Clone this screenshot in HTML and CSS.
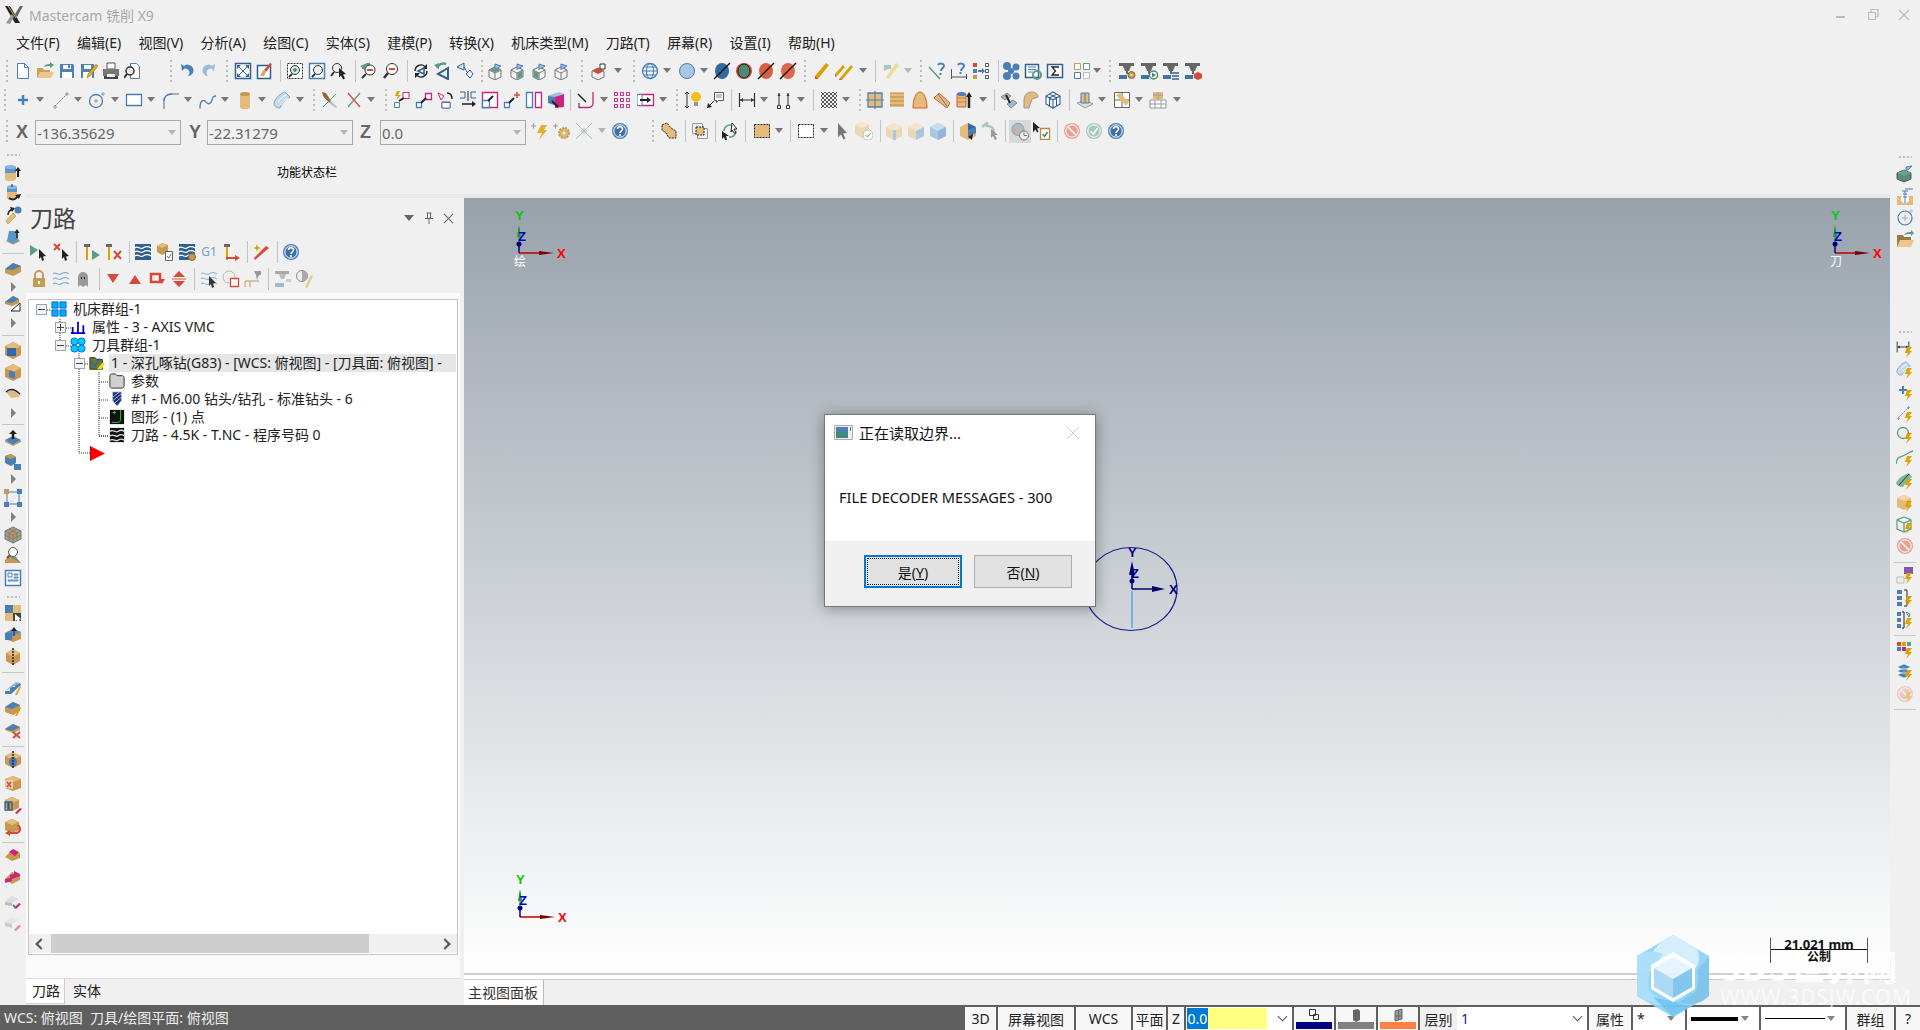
FILE: index.html
```html
<!DOCTYPE html>
<html lang="zh">
<head>
<meta charset="utf-8">
<title>Mastercam 铣削 X9</title>
<link rel="stylesheet" href="styles.css">
</head>
<body>
<svg class="defs" aria-hidden="true">
<defs>
<symbol id="bolt" viewBox="0 0 18 18"><path d="M11 7h5l-3 4h3l-6 7 2-5H9z" fill="#d9a300"/></symbol>
<symbol id="new" viewBox="0 0 18 18"><path d="M3.500 1.500h7l4 4v11h-11z" fill="#fff" stroke="#4a7fb5"/><path d="M10.500 1.500v4h4" fill="none" stroke="#4a7fb5"/></symbol>
<symbol id="open" viewBox="0 0 18 18"><path d="M1 16V6h6l1 2h6v8z" fill="#c9a060"/><path d="M1 16l3-6h14l-3 6z" fill="#eec58a"/><path d="M8 5c1-3 4-3 6-3V0l4 3-4 3V4c-2 0-4 0-6 1z" fill="#5d9b85"/></symbol>
<symbol id="save" viewBox="0 0 18 18"><path d="M2 2h13l1 1v13H2z" fill="#4f83b8"/><path d="M5 3h8v4H5z" fill="#fff"/><path d="M4 10h10v6H4z" fill="#fff"/><path d="M10 3h2v3h-2z" fill="#4f83b8"/></symbol>
<symbol id="saveas" viewBox="0 0 18 18"><path d="M1 2h13v14H1z" fill="#4f83b8"/><path d="M4 3h7v4H4zM3 10h9v6H3z" fill="#fff"/><path d="M7 16l1-4 8-10 2 2-8 10z" fill="#e0a820" stroke="#9c6a10" stroke-width=".5"/></symbol>
<symbol id="print" viewBox="0 0 18 18"><path d="M5 1h8v6H5z" fill="#fff" stroke="#555"/><path d="M1 7h16v7H1z" fill="#777"/><path d="M2 14h14v3H2z" fill="#444"/><path d="M5 12h8v3H5z" fill="#eee"/></symbol>
<symbol id="prev" viewBox="0 0 18 18"><path d="M6.500 1.500h6l3 3v12h-9z" fill="#fff" stroke="#4a7fb5"/><circle cx="6" cy="9" r="4" fill="#e8e8e8" stroke="#333" stroke-width="1.500"/><path d="M3 12l-3 4" stroke="#333" stroke-width="2"/></symbol>
<symbol id="undo" viewBox="0 0 18 18"><path d="M3 3l1 7 2.500-2.500c3 0 5 2 5 4 0 2-1 3-2 4 4-1 6-3 6-6 0-4-4-6-7-6L6 5z" fill="#4a7fb5" transform="translate(0 -1)"/></symbol>
<symbol id="redo" viewBox="0 0 18 18"><path d="M15 3l-1 7-2.500-2.500c-3 0-5 2-5 4 0 2 1 3 2 4-4-1-6-3-6-6 0-4 4-6 7-6L12 5z" fill="#9cbbd6" transform="translate(0 -1)"/></symbol>
<symbol id="fit" viewBox="0 0 18 18"><path d="M1.500 1.500h15v15h-15z" fill="#fff" stroke="#2f5f8f" stroke-width="1.500"/><path d="M4 4l10 10M14 4L4 14" stroke="#2f5f8f"/><path d="M3 3h4L3 7zM15 3v4l-4-4zM3 15v-4l4 4zM15 15h-4l4-4z" fill="#2f5f8f"/></symbol>
<symbol id="fitb" viewBox="0 0 18 18"><path d="M1.500 3.500h13v13h-13z" fill="#fff" stroke="#2f5f8f" stroke-width="1.500"/><path d="M4 14l3-6 3 2-2 4z" fill="#d6a860"/><path d="M8 8l6-7 2 1-6 8z" fill="#d64a3a"/></symbol>
<symbol id="zwin" viewBox="0 0 18 18"><path d="M1.500 1.500h15v15h-15z" fill="#fff" stroke="#333" stroke-dasharray="2 1"/><circle cx="9" cy="8" r="4.500" fill="#d5ebe2" stroke="#333"/><path d="M7 8h4M9 6v4" stroke="#3d8a6c" stroke-width="1.500"/><path d="M6 12l-3 3" stroke="#333" stroke-width="2"/></symbol>
<symbol id="ztar" viewBox="0 0 18 18"><path d="M1.500 1.500h15v15h-15z" fill="#fff" stroke="#4a7fb5" stroke-width="1.500"/><circle cx="10" cy="8" r="4.500" fill="#e8eef4" stroke="#333"/><path d="M7 12l-3 3" stroke="#333" stroke-width="2"/></symbol>
<symbol id="zsel" viewBox="0 0 18 18"><circle cx="7" cy="6" r="4.500" fill="#eee" stroke="#333"/><path d="M4 10l-3 4" stroke="#333" stroke-width="2"/><path d="M9 6l7 6-3 .5 2 4-2 1-2-4-2 2z" fill="#222"/></symbol>
<symbol id="unz" viewBox="0 0 18 18"><path d="M3 7a7 7 0 0 1 7-5" fill="none" stroke="#5d9b85" stroke-width="2.500"/><path d="M0 4l5-2v6z" fill="#5d9b85"/><circle cx="10" cy="8" r="5" fill="#fff" stroke="#333"/><path d="M7 8h6" stroke="#d64a3a" stroke-width="2"/><path d="M6 12l-4 4" stroke="#333" stroke-width="2"/></symbol>
<symbol id="unz2" viewBox="0 0 18 18"><circle cx="10" cy="7" r="5.500" fill="#fff" stroke="#333"/><path d="M7 7h6" stroke="#d64a3a" stroke-width="2"/><path d="M6 11l-4 5" stroke="#333" stroke-width="2.500"/></symbol>
<symbol id="rota" viewBox="0 0 18 18"><path d="M3 9a6 6 0 0 1 10-4.500M15 9a6 6 0 0 1-10 4.500" fill="none" stroke="#222" stroke-width="1.400"/><path d="M15 2v5H10zM3 16v-5h5z" fill="#222"/><path d="M12 6L6 9l6 3z" fill="#fff" stroke="#2f5f8f" stroke-width="1.500"/></symbol>
<symbol id="rotb" viewBox="0 0 18 18"><path d="M3 6a7 7 0 0 1 9-4" fill="none" stroke="#5d9b85" stroke-width="2.500"/><path d="M0 3l5-2v6z" fill="#5d9b85"/><path d="M14 6L4 12l10 5z" fill="#e8eef4" stroke="#2f5f8f" stroke-width="2"/></symbol>
<symbol id="rotc" viewBox="0 0 18 18"><path d="M8 1L1 5l7 3z" fill="#dbe7f1" stroke="#2f5f8f"/><path d="M14 8l-4 4 4 4 3-4z" fill="#e8eef4" stroke="#2f5f8f"/><path d="M8 5l3 5" stroke="#2f5f8f"/></symbol>
<symbol id="cvbase" viewBox="0 0 18 18"><path d="M8 5l6 3v7l-6 3-6-3V8z" fill="#f4f4f4" stroke="#777"/><path d="M8 5l6 3-6 3-6-3z" fill="#f4f4f4" stroke="#777"/><path d="M8 11v7" stroke="#777"/><path d="M8 8V2l6 2-5 3" fill="#9fbfd9" stroke="#4a7fb5"/></symbol>
<symbol id="cv1" viewBox="0 0 18 18"><use href="#cvbase"/><path d="M8 5.500l5.500 2.500L8 10.500 2.500 8z" fill="#5d9b85"/></symbol>
<symbol id="cv2" viewBox="0 0 18 18"><use href="#cvbase"/><path d="M2.500 8.500L7.500 11v6.200l-5-2.500z" fill="#5d9b85"/></symbol>
<symbol id="cv3" viewBox="0 0 18 18"><use href="#cvbase"/><path d="M13.500 8.500L8.500 11v6.200l5-2.500z" fill="#5d9b85"/></symbol>
<symbol id="cvr" viewBox="0 0 18 18"><path d="M8 6l6 3v6l-6 3-6-3V9z" fill="#f0f0f0" stroke="#777"/><path d="M8 6l6 3-6 3-6-3z" fill="#d64a3a"/><path d="M10 2h5v5h-5z" fill="#fff" stroke="#333"/></symbol>
<symbol id="globe" viewBox="0 0 18 18"><circle cx="9" cy="9" r="7.500" fill="#e9f0f6" stroke="#4a7fb5" stroke-width="1.300"/><ellipse cx="9" cy="9" rx="3.500" ry="7.500" fill="none" stroke="#4a7fb5"/><path d="M1.500 9h15M3 5h12M3 13h12" stroke="#4a7fb5"/></symbol>
<symbol id="sphere" viewBox="0 0 18 18"><circle cx="9" cy="9" r="7.500" fill="#a9c6e2" stroke="#4a7fb5"/></symbol>
<symbol id="disc" viewBox="0 0 18 18"><ellipse cx="9" cy="9" rx="7" ry="8" fill="currentColor"/><path d="M1 17L17 1" stroke="#111" stroke-width="1.500"/></symbol>
<symbol id="discg" viewBox="0 0 18 18"><ellipse cx="9" cy="9" rx="8" ry="8" fill="#d64a3a"/><ellipse cx="9" cy="9" rx="6" ry="7" fill="#4c8a72" stroke="#222"/></symbol>
<symbol id="pencil" viewBox="0 0 18 18"><path d="M2 14L13 1l3 2L5 17l-3 0z" fill="#d9a300"/><path d="M2 14l3 3H2z" fill="#d64a3a"/></symbol>
<symbol id="pencil2" viewBox="0 0 18 18"><path d="M0 12L8 3l2 2-8 9z" fill="#d9a300"/><path d="M5 16l11-13 2 2L7 18z" fill="#d9a300"/><path d="M0 12l2 2-2 1zM5 16l2 2-3 0z" fill="#d64a3a"/></symbol>
<symbol id="bent" viewBox="0 0 18 18"><path d="M4 15L14 1l3 2L7 17z" fill="#eedaa0"/><path d="M2 3h7v4H6l-4 2z" fill="#a8cabb"/></symbol>
<symbol id="qline" viewBox="0 0 18 18"><path d="M1 5l11 12" stroke="#5d9b85" stroke-width="1.500"/><path d="M10 3c1-2 6-2 6 1 0 2-3 2-3 5M12.500 11v2" fill="none" stroke="#4a7fb5" stroke-width="2"/></symbol>
<symbol id="qdim" viewBox="0 0 18 18"><path d="M1.500 7v10M16.500 12v5M2 15h14" stroke="#555"/><path d="M8 3c1-2 6-2 6 1 0 2-3 2-3 5M10.500 10v2" fill="none" stroke="#4a7fb5" stroke-width="2"/></symbol>
<symbol id="lst" viewBox="0 0 18 18"><path d="M1 1h4v4H1z" fill="#d64a3a"/><path d="M1 7h4v4H1z" fill="#4a7fb5"/><path d="M1 13h4v4H1z" fill="#c49a55"/><path d="M6 9h5" stroke="#4a7fb5" stroke-width="2"/><path d="M10 6l3 3-3 3z" fill="#4a7fb5"/><path d="M13.500 1.500h3v3h-3zM13.500 7.500h3v3h-3zM13.500 13.500h3v3h-3z" fill="#fff" stroke="#555"/></symbol>
<symbol id="fan" viewBox="0 0 18 18"><circle cx="9" cy="9" r="3" fill="#4a7fb5"/><circle cx="5" cy="4" r="4" fill="#4a7fb5"/><circle cx="14" cy="5" r="3.500" fill="#4a7fb5"/><circle cx="14" cy="14" r="3.500" fill="#4a7fb5"/><circle cx="5" cy="14" r="4" fill="#4a7fb5"/></symbol>
<symbol id="doc" viewBox="0 0 18 18"><path d="M1.500 2.500h13v13h-13z" fill="#fff" stroke="#2f5f8f" stroke-width="1.500"/><path d="M4 5h8M4 7.500h8M4 10h5" stroke="#4a7fb5"/><circle cx="13" cy="13" r="4" fill="none" stroke="#5d9b85" stroke-width="2"/></symbol>
<symbol id="sigma" viewBox="0 0 18 18"><path d="M1.500 2.500h15v13h-15z" fill="#fff" stroke="#2f5f8f" stroke-width="1.500"/><path d="M13 5H6l3.500 4L6 13h7" fill="none" stroke="#222" stroke-width="1.300"/></symbol>
<symbol id="grid4" viewBox="0 0 18 18"><path d="M1.500 1.500h6v6h-6z" fill="#fff" stroke="#c49a55"/><path d="M10.500 1.500h6v6h-6z" fill="#fff" stroke="#5d9b85"/><path d="M1.500 10.500h6v6h-6z" fill="#fff" stroke="#4a7fb5"/><path d="M10.500 10.500h6v6h-6z" fill="#fff" stroke="#bbb"/></symbol>
<symbol id="mach" viewBox="0 0 18 18"><path d="M1 1h15v3H1zM5 4h8l-2 5H7z" fill="#666"/><path d="M8 9h2v3H8z" fill="#666"/><path d="M1 13h8v4H1z" fill="#3f74a8"/></symbol>
<symbol id="mach1" viewBox="0 0 18 18"><use href="#mach"/><circle cx="13.500" cy="13" r="3.500" fill="#c49a55" stroke="#8d6a30"/><circle cx="13.500" cy="13" r="1" fill="#fff"/></symbol>
<symbol id="mach2" viewBox="0 0 18 18"><use href="#mach"/><circle cx="13.500" cy="13" r="4" fill="#fff" stroke="#4c8a72" stroke-width="1.500"/><path d="M12 10.500l4 2.500-4 2.500z" fill="#4c8a72"/></symbol>
<symbol id="mach3" viewBox="0 0 18 18"><use href="#mach"/><path d="M10 11h7M10 14h7M10 17h7" stroke="#2f5f8f" stroke-width="1.500"/></symbol>
<symbol id="mach4" viewBox="0 0 18 18"><use href="#mach"/><path d="M10 12l4-2 4 2v4l-4 2-4-2z" fill="#d64a3a"/></symbol>
<symbol id="plus" viewBox="0 0 18 18"><path d="M4 9h10M9 4v10" stroke="#4a7fb5" stroke-width="2.500"/></symbol>
<symbol id="line" viewBox="0 0 18 18"><path d="M3 15L15 3" stroke="#4a7fb5" stroke-dasharray="2 1"/><path d="M1 16h4M3 14v4M13 3h4M15 1v4" stroke="#999"/></symbol>
<symbol id="circ" viewBox="0 0 18 18"><circle cx="8" cy="10" r="6.500" fill="none" stroke="#4a7fb5" stroke-width="1.300"/><path d="M6 10h4M8 8v4" stroke="#999"/><path d="M13 3h4M15 1v4" stroke="#999"/></symbol>
<symbol id="rect" viewBox="0 0 18 18"><path d="M1.500 3.500h15v11h-15z" fill="#fff" stroke="#4a7fb5" stroke-width="1.300"/></symbol>
<symbol id="arc" viewBox="0 0 18 18"><path d="M2 18V9c0-4 4-6 8-6h7" fill="none" stroke="#666"/><path d="M2 10c0-4 3-7 8-7" fill="none" stroke="#4a7fb5" stroke-width="1.500"/></symbol>
<symbol id="spline" viewBox="0 0 18 18"><path d="M1 17c0-8 4-9 6-6s5 2 6-2 2-4 4-4" fill="none" stroke="#4a7fb5" stroke-width="1.300"/><path d="M1 14v4" stroke="#999"/></symbol>
<symbol id="cyl" viewBox="0 0 18 18"><path d="M4 3h10v13a5 2 0 0 1-10 0z" fill="#e5bb7c"/><ellipse cx="9" cy="3" rx="5" ry="2" fill="#c9974f"/></symbol>
<symbol id="surf" viewBox="0 0 18 18"><path d="M1 12C4 5 7 3 12 1l5 5c-5 2-7 5-10 11-4 0-6-2-6-5z" fill="#c8d9e8" stroke="#7ea3c4"/><path d="M5 11c2-3 4-5 8-7M8 14c1-3 3-5 7-7" fill="none" stroke="#fff"/></symbol>
<symbol id="brush" viewBox="0 0 18 18"><path d="M1 1l4 1 5 8-2 2-6-7z" fill="#8a6a3c"/><path d="M8 12l2-2 6 6-1 1z" fill="#bbb"/><path d="M2 16L15 3" stroke="#5d9b85"/></symbol>
<symbol id="xline" viewBox="0 0 18 18"><path d="M3 16L15 2" stroke="#5d9b85" stroke-width="1.300"/><path d="M3 2l12 14" stroke="#d64a3a" stroke-width="1.300"/></symbol>
<symbol id="mvb" viewBox="0 0 18 18"><path d="M10 1.500h6v6h-6z" fill="#fff" stroke="#c9247e"/><path d="M1.500 11.500h5v5h-5z" fill="#fff" stroke="#4a7fb5"/><path d="M6 10l5-3" stroke="#222" stroke-width="2"/><path d="M4 0L2 5h3l-2 4 5-5H5l2-4z" fill="#d9a300"/></symbol>
<symbol id="mv" viewBox="0 0 18 18"><path d="M10.500 2.500h6v6h-6z" fill="#fff" stroke="#c9247e" stroke-width="1.300"/><path d="M1.500 11.500h5v5h-5z" fill="#fff" stroke="#4a7fb5" stroke-width="1.300"/><path d="M6 12l5-5" stroke="#222" stroke-width="2"/></symbol>
<symbol id="mvr" viewBox="0 0 18 18"><path d="M1 2l6 3-3 4zM5 11h8v6H5z" fill="#fff" stroke="#c9247e"/><path d="M5 11.500h8v5.500H5z" fill="#fff" stroke="#4a7fb5"/><path d="M10 2c3 0 5 2 5 6" fill="none" stroke="#222" stroke-width="1.500"/></symbol>
<symbol id="mvm" viewBox="0 0 18 18"><path d="M1 1h5M1 7h5M6 1v6M12 1h5M12 7h5M12 1v6" stroke="#2f5f8f" fill="none"/><path d="M9 0v10" stroke="#222"/><path d="M3 13h11" stroke="#222" stroke-width="1.500"/><path d="M13 10l4 3-4 3z" fill="#222"/></symbol>
<symbol id="mvs" viewBox="0 0 18 18"><path d="M1.500 1.500h15v15h-15z" fill="#fff" stroke="#c9247e" stroke-width="1.300"/><path d="M1.500 9.500h7v7h-7z" fill="#fff" stroke="#4a7fb5" stroke-width="1.300"/><path d="M7 10l5-5" stroke="#222" stroke-width="2"/></symbol>
<symbol id="mvt" viewBox="0 0 18 18"><path d="M1.500 11.500h5v5h-5z" fill="#fff" stroke="#4a7fb5" stroke-width="1.300"/><path d="M6 12l5-5" stroke="#222" stroke-width="2"/><path d="M11 4h6M14 1v6" stroke="#d64a3a" stroke-width="1.500"/></symbol>
<symbol id="mvo" viewBox="0 0 18 18"><path d="M1.500 1.500h6v15h-6z" fill="#fff" stroke="#4a7fb5" stroke-width="1.300"/><path d="M10.500 1.500h6v15h-6z" fill="#fff" stroke="#c9247e" stroke-width="1.300"/></symbol>
<symbol id="mvc" viewBox="0 0 18 18"><path d="M1 5l9-3v13l-9-3z" fill="#4a7fb5"/><path d="M1 5l11-4 5 2-9 3z" fill="#9fc0de"/><path d="M8 6l9-3v13l-9 1z" fill="#c9247e"/><path d="M5 10l6 6" stroke="#222" stroke-width="2"/></symbol>
<symbol id="fil" viewBox="0 0 18 18"><path d="M2 16.500h10c2 0 4-2 4-4V1" fill="none" stroke="#c9247e" stroke-width="1.300"/><path d="M1 3l8 8" stroke="#222" stroke-width="1.500"/><path d="M2 12v5" stroke="#222"/></symbol>
<symbol id="mg" viewBox="0 0 18 18"><path d="M1.500 1.500h3v3h-3zM7.500 1.500h3v3h-3zM13.500 1.500h3v3h-3zM1.500 7.500h3v3h-3zM7.500 7.500h3v3h-3zM13.500 7.500h3v3h-3zM1.500 13.500h3v3h-3zM7.500 13.500h3v3h-3zM13.500 13.500h3v3h-3z" fill="#fff" stroke="#c9247e"/></symbol>
<symbol id="mvx" viewBox="0 0 18 18"><path d="M1.500 3.500h15v11h-15z" fill="#fff" stroke="#c9247e" stroke-width="1.300"/><path d="M0 3.500h5v11H0z" fill="#fff" stroke="#4a7fb5"/><path d="M3 9h8" stroke="#222" stroke-width="2"/><path d="M10 6l4 3-4 3z" fill="#222"/></symbol>
<symbol id="bulb" viewBox="0 0 18 18"><path d="M3 1v16M1 3l2-2 2 2M1 15l2 2 2-2" fill="none" stroke="#333"/><circle cx="12" cy="6" r="5" fill="#f0c020"/><path d="M10 11h4v4h-4z" fill="#999"/></symbol>
<symbol id="note" viewBox="0 0 18 18"><path d="M8.500 1.500h9v8h-5l-2 2v-2h-2z" fill="#fff" stroke="#555"/><path d="M10 4h6M10 6h6" stroke="#888"/><path d="M1 17l7-7" stroke="#222"/><path d="M1 17l1-5 4 4z" fill="#222"/></symbol>
<symbol id="dimh" viewBox="0 0 18 18"><path d="M1.500 2v14M16.500 2v14M2 9h14" stroke="#333" stroke-width="1.200"/><path d="M2 9l3-2v4zM16 9l-3-2v4z" fill="#333"/></symbol>
<symbol id="dimv" viewBox="0 0 18 18"><path d="M4 2v12M13 2v12" stroke="#333"/><path d="M2.500 14.500h3v3h-3zM11.500 14.500h3v3h-3z" fill="#fff" stroke="#333"/><path d="M4 2L2.500 5h3zM13 2l-1.500 3h3z" fill="#333"/></symbol>
<symbol id="hatch" viewBox="0 0 18 18"><defs><pattern id="pt" width="4" height="4" patternUnits="userSpaceOnUse"><path d="M0 0h2v2H0zM2 2h2v2H2z" fill="#555"/></pattern></defs><path d="M1 1h16v16H1z" fill="url(#pt)"/></symbol>
<symbol id="s1" viewBox="0 0 18 18"><path d="M2 2h14v14H2z" fill="#e5bb7c" stroke="#4a7fb5" stroke-width="1.300"/><path d="M9 0v18M0 9h18" stroke="#4a7fb5"/></symbol>
<symbol id="s2" viewBox="0 0 18 18"><path d="M2 2h14v14H2z" fill="#e5bb7c"/><path d="M2 2h14M2 6h14M2 10h14M2 14h14" stroke="#b48a40"/></symbol>
<symbol id="s3" viewBox="0 0 18 18"><path d="M2 17C2 8 5 1 9 1s7 7 7 16z" fill="#e5bb7c" stroke="#d6602a"/></symbol>
<symbol id="s4" viewBox="0 0 18 18"><path d="M1 7l5-5 11 10-3 5z" fill="#e5bb7c" stroke="#d6602a"/><path d="M5 3l9 12" stroke="#4a7fb5"/></symbol>
<symbol id="s5" viewBox="0 0 18 18"><path d="M1 3h9v13H1z" fill="#e5bb7c" stroke="#d6602a"/><ellipse cx="5.500" cy="3" rx="4.500" ry="2" fill="#4a7fb5"/><path d="M1 7h9M1 11h9" stroke="#b48a40"/><path d="M13 17V5" stroke="#222" stroke-width="2.500"/><path d="M10 6l3-5 3 5z" fill="#222"/></symbol>
<symbol id="w1" viewBox="0 0 18 18"><path d="M1 6l6-4 4 3-6 4zM7 13l6-4 4 3-6 5z" fill="#9eb8d0" stroke="#888"/><path d="M6 4l4 8" stroke="#222" stroke-width="2"/></symbol>
<symbol id="w2" viewBox="0 0 18 18"><path d="M2 17V9c0-5 3-8 8-8 4 0 6 3 6 5l-6 2-3 9z" fill="#e5bb7c" stroke="#999"/></symbol>
<symbol id="w3" viewBox="0 0 18 18"><path d="M9 1l7 4v8l-7 4-7-4V5zM2 5l7 4 7-4M9 9v8M5.500 3l7 4v8M12.500 3l-7 4v8" fill="#fff" stroke="#2f5f8f" stroke-width="1.100"/></symbol>
<symbol id="p1" viewBox="0 0 18 18"><path d="M1 12l8 5 8-4-8-4z" fill="#ddd" stroke="#999"/><path d="M5 2h8v10H5z" fill="#e5bb7c" stroke="#4a7fb5"/><path d="M9 2v10" stroke="#4a7fb5"/></symbol>
<symbol id="p2" viewBox="0 0 18 18"><path d="M1.500 1.500h15v15h-15z" fill="#fff" stroke="#666"/><path d="M1 9h16M9 1v16" stroke="#666"/><path d="M3 4l4-2 9 9-3 4z" fill="#e5bb7c"/></symbol>
<symbol id="p3" viewBox="0 0 18 18"><path d="M4 1h10v7H4z" fill="#e5bb7c"/><path d="M1 9h16v8H1z" fill="#fff" stroke="#999"/><path d="M1 13h16M6 9v8M12 9v8M4 4h10M9 1v8" stroke="#999"/></symbol>
<symbol id="bp" viewBox="0 0 18 18"><path d="M0 4h5M2.500 1.500v5" stroke="#999"/><path d="M10 3h6l-3 5h3l-8 10 3-7H6z" fill="#e0b030"/></symbol>
<symbol id="gp" viewBox="0 0 18 18"><path d="M0 4h5M2.500 1.500v5" stroke="#999"/><circle cx="11" cy="11" r="5" fill="#d8b878" stroke="#c49a55" stroke-width="2" stroke-dasharray="2 1"/><circle cx="11" cy="11" r="1.500" fill="#f0f0f0"/></symbol>
<symbol id="xc" viewBox="0 0 18 18"><path d="M1 1l16 16M17 1L1 17" stroke="#a8cabb"/><path d="M9 6v6M6 9h6" stroke="#bbb"/></symbol>
<symbol id="help" viewBox="0 0 18 18"><circle cx="9" cy="9" r="8" fill="#4a7fb5"/><circle cx="9" cy="9" r="6.200" fill="#3f70a5" stroke="#fff"/><path d="M6.500 7c0-3 5-3 5 0 0 2-2.500 2-2.500 4M9 12v2" fill="none" stroke="#fff" stroke-width="1.600"/></symbol>
<symbol id="selt" viewBox="0 0 18 18"><path d="M2 3l5-2 4 5 5 3v7H9l-3-5-4-3z" fill="#e5bb7c" stroke="#222" stroke-dasharray="2 1"/></symbol>
<symbol id="sel2" viewBox="0 0 18 18"><path d="M1.500 1.500h10v10h-10z" fill="none" stroke="#999"/><path d="M6.500 6.500h10v10h-10z" fill="none" stroke="#999"/><path d="M5 5h8v8H5z" fill="#e5bb7c" stroke="#222" stroke-dasharray="2 1"/></symbol>
<symbol id="selr" viewBox="0 0 18 18"><path d="M3 9a6 6 0 0 1 7-6M15 9a6 6 0 0 1-7 6" fill="none" stroke="#5d9b85" stroke-width="1.500"/><path d="M11 1l5 6-3 0 2 4-2 0-2-3-1 2z" fill="#fff" stroke="#222"/><path d="M1 9l7 5-3 0 1 4-2 0-1-3-2 2z" fill="#222"/></symbol>
<symbol id="seld" viewBox="0 0 18 18"><path d="M1.500 2.500h15v13h-15z" fill="#e5bb7c" stroke="#222" stroke-dasharray="2 1"/></symbol>
<symbol id="dash" viewBox="0 0 18 18"><path d="M1.500 2.500h15v13h-15z" fill="#fff" stroke="#222" stroke-dasharray="2 1"/></symbol>
<symbol id="cur" viewBox="0 0 18 18"><path d="M5 1l9 10-4 .5 2.500 5-2 1-2.500-5L5 15z" fill="#777"/></symbol>
<symbol id="bchk" viewBox="0 0 18 18"><path d="M7 0l7 3v9l-7 4-7-4V3z" fill="#ecd7b4"/><path d="M7 0l7 3-7 3-7-3z" fill="#f3e6cf"/><circle cx="13" cy="13" r="5" fill="#fff" stroke="#a8cabb"/><path d="M10.500 13l2 2 3-4" fill="none" stroke="#5d9b85"/></symbol>
<symbol id="c1" viewBox="0 0 18 18"><path d="M9 1l8 4v9l-8 4-8-4V5z" fill="#ecd7b4"/><path d="M9 1l8 4-8 4-8-4z" fill="#f3e6cf"/><path d="M8 8h3v10H8z" fill="#a9c6e2"/></symbol>
<symbol id="c2" viewBox="0 0 18 18"><path d="M9 1l8 4v9l-8 4-8-4V5z" fill="#ecd7b4"/><path d="M9 1l8 4-8 4-8-4z" fill="#f3e6cf"/><path d="M9 9l8-4v9l-8 4z" fill="#a9c6e2"/></symbol>
<symbol id="c3" viewBox="0 0 18 18"><path d="M9 1l8 4v9l-8 4-8-4V5z" fill="#a9c6e2"/><path d="M9 1l8 4-8 4-8-4z" fill="#c6dcef"/><path d="M9 9l8-4v9l-8 4z" fill="#93b6d8"/></symbol>
<symbol id="c4" viewBox="0 0 18 18"><path d="M9 1l8 4v9l-8 4-8-4V5z" fill="#e5bb7c"/><path d="M9 1l8 4-8 4z" fill="#2f6aa8"/><path d="M9 9l8-4v6l-8 4z" fill="#4a7fb5"/><path d="M9 15l5-3-1 6z" fill="#222"/></symbol>
<symbol id="cb" viewBox="0 0 18 18"><path d="M1 5l5-4 0 3c5 0 7 3 7 6" fill="none" stroke="#a8cabb" stroke-width="2.500"/><path d="M10 7l7 6-3 0 2 4-2 1-2-4-2 2z" fill="#999"/></symbol>
<symbol id="tgt" viewBox="0 0 18 18"><circle cx="7" cy="7" r="6" fill="#9fbfd9" stroke="#999"/><circle cx="7" cy="7" r="3" fill="#d8b090"/><circle cx="13" cy="13" r="4.500" fill="#eee" stroke="#777"/><path d="M13 10v3h3" fill="none" stroke="#777"/></symbol>
<symbol id="clip" viewBox="0 0 18 18"><path d="M0 0l7 6-3 .5 1.500 3-1.500 1-1.500-3L0 10z" fill="#222"/><path d="M7.500 6.500h9v11h-9z" fill="#fff" stroke="#b48a40" stroke-width="1.300"/><path d="M9.500 12l2 2.500 3-4.500" fill="none" stroke="#3d8a6c" stroke-width="1.500"/></symbol>
<symbol id="nor" viewBox="0 0 18 18"><circle cx="9" cy="9" r="8" fill="#e8a397"/><circle cx="9" cy="9" r="6.200" fill="#e8a397" stroke="#fff"/><path d="M5 5l8 8" stroke="#fff" stroke-width="1.500"/></symbol>
<symbol id="okg" viewBox="0 0 18 18"><circle cx="9" cy="9" r="8" fill="#a8cabb"/><circle cx="9" cy="9" r="6.200" fill="#a8cabb" stroke="#fff"/><path d="M5.500 9l3 3 4-6" fill="none" stroke="#fff" stroke-width="1.500"/></symbol>
<symbol id="b1" viewBox="0 0 18 18"><use href="#dimh" width="14" height="14"/><use href="#bolt"/></symbol>
<symbol id="b2" viewBox="0 0 18 18"><use href="#surf" width="15" height="15"/><use href="#bolt"/></symbol>
<symbol id="b3" viewBox="0 0 18 18"><use href="#plus" width="14" height="14"/><use href="#bolt"/></symbol>
<symbol id="b4" viewBox="0 0 18 18"><use href="#line" width="15" height="15"/><use href="#bolt"/></symbol>
<symbol id="b5" viewBox="0 0 18 18"><circle cx="7" cy="7" r="5.500" fill="none" stroke="#5d9b85" stroke-width="1.300"/><use href="#bolt"/></symbol>
<symbol id="b6" viewBox="0 0 18 18"><path d="M0 15C1 7 5 8 9 6s6-4 8-4" fill="none" stroke="#5d9b85" stroke-width="1.300"/><use href="#bolt"/></symbol>
<symbol id="b7" viewBox="0 0 18 18"><path d="M0 11C3 5 8 3 13 1l3 4c-4 3-7 6-9 10-3 0-6-1-7-4z" fill="#7fb59f"/><path d="M3 13L13 2" stroke="#333"/><use href="#bolt"/></symbol>
<symbol id="b8" viewBox="0 0 18 18"><path d="M8 1l7 3v9l-7 3-7-3V4z" fill="#e5bb7c"/><path d="M8 1l7 3-7 3-7-3z" fill="#f3d7a8"/><use href="#bolt"/></symbol>
<symbol id="b9" viewBox="0 0 18 18"><path d="M8 1l7 3v9l-7 3-7-3V4zM1 4l7 3 7-3M8 7v9" fill="none" stroke="#5d9b85" stroke-width="1.200"/><use href="#bolt"/></symbol>
<symbol id="b10" viewBox="0 0 18 18"><path d="M1 11h7v6H1z" fill="#eee" stroke="#bbb"/><path d="M8 1h9v7H8z" fill="#8b56a8"/><use href="#bolt"/></symbol>
<symbol id="b11" viewBox="0 0 18 18"><path d="M1 1h5v4H1zM1 7h5v4H1zM1 13h5v4H1z" fill="#4a7fb5"/><path d="M8 1h3v16H8" fill="none" stroke="#222"/><use href="#bolt"/></symbol>
<symbol id="b12" viewBox="0 0 18 18"><path d="M1 1h4v4H1zM1 7h4v4H1zM1 13h4v4H1z" fill="#4a7fb5"/><path d="M6 1h2v16H6" fill="none" stroke="#222"/><path d="M10 1l4 2-1 3z" fill="#fff" stroke="#4a7fb5"/><use href="#bolt"/></symbol>
<symbol id="b13" viewBox="0 0 18 18"><path d="M1 1h4v4H1z" fill="#d64a3a"/><path d="M6 1h4v4H6z" fill="#d9a300"/><path d="M11 1h4v4h-4z" fill="#5d9b85"/><path d="M1 6h4v4H1z" fill="#4a7fb5"/><path d="M6 6h4v4H6z" fill="#c9247e"/><use href="#bolt"/></symbol>
<symbol id="b14" viewBox="0 0 18 18"><path d="M1 4l7-3 7 3-7 3zM1 8l7-3 7 3-7 3zM1 12l7-3 7 3-7 3z" fill="#4a7fb5" stroke="#fff" stroke-width=".5"/><use href="#bolt"/></symbol>
<symbol id="b15" viewBox="0 0 18 18"><use href="#nor"/><use href="#bolt"/></symbol>
<symbol id="pl1" viewBox="0 0 18 18"><path d="M1 2l8 5-8 6z" fill="#5d9b85"/><path d="M10 6l7 7-3 .5 1 3.500-2 1-1-4-2 2z" fill="#222"/></symbol>
<symbol id="pl2" viewBox="0 0 18 18"><path d="M1 1l6 6M7 1L1 7" stroke="#d64a3a" stroke-width="2"/><path d="M9 6l7 7-3 .5 1 3.500-2 1-1-4-2 2z" fill="#222"/></symbol>
<symbol id="pl3" viewBox="0 0 18 18"><path d="M1 1h6v3H1z" fill="#666"/><path d="M3 4h2v13H3z" fill="#d9a300"/><path d="M9 7l8 5-8 5z" fill="#5d9b85"/></symbol>
<symbol id="pl4" viewBox="0 0 18 18"><path d="M1 1h6v3H1z" fill="#666"/><path d="M3 4h2v13H3z" fill="#d9a300"/><path d="M9 8l7 8M16 8l-7 8" stroke="#d64a3a" stroke-width="2"/></symbol>
<symbol id="wav" viewBox="0 0 18 18"><path d="M1 1h16v16H1z" fill="#2f5f8f"/><path d="M1 5c3-3 5 2 8 0s5-2 8 0M1 9c3-3 5 2 8 0s5-2 8 0M1 13c3-3 5 2 8 0s5-2 8 0" fill="none" stroke="#fff" stroke-width="1.300"/></symbol>
<symbol id="boxclip" viewBox="0 0 18 18"><path d="M6 0l6 2v7l-6 3-5-3V3z" fill="#c9974f"/><path d="M6 0l6 2-6 3-5-2z" fill="#e5bb7c"/><path d="M9.500 8.500h7v9h-7z" fill="#fff" stroke="#666"/><path d="M11 13l2 2 2-4" fill="none" stroke="#3d8a6c"/></symbol>
<symbol id="wavg" viewBox="0 0 18 18"><use href="#wav"/><circle cx="14" cy="14" r="3.500" fill="#c49a55" stroke="#8d6a30"/></symbol>
<symbol id="toolr" viewBox="0 0 18 18"><path d="M1 1h6v3H1z" fill="#666"/><path d="M3 4h2v13H3z" fill="#d9a300"/><path d="M3 15h11" stroke="#d64a3a" stroke-width="2"/><path d="M12 12l5 3-5 3z" fill="#d64a3a"/></symbol>
<symbol id="stick" viewBox="0 0 18 18"><path d="M2 17l-1-2L13 3l3 2z" fill="#d64a3a"/><path d="M4 1l1 3 3 1-3 1-1 3-1-3-3-1 3-1z" fill="#d9a300"/></symbol>
<symbol id="lock" viewBox="0 0 18 18"><path d="M5 8V5a4 4 0 0 1 8 0v3" fill="none" stroke="#c49a55" stroke-width="2"/><path d="M3 8h12v9H3z" fill="#c49a55"/><path d="M8 11h2v3H8z" fill="#fff"/></symbol>
<symbol id="waves" viewBox="0 0 18 18"><path d="M1 4c3-3 5 2 8 0s5-2 8 0M1 9c3-3 5 2 8 0s5-2 8 0M1 14c3-3 5 2 8 0s5-2 8 0" fill="none" stroke="#8fb0cf" stroke-width="1.300"/></symbol>
<symbol id="ghost" viewBox="0 0 18 18"><path d="M4 17V7a5 5 0 0 1 10 0v10l-2-2-3 2-3-2z" fill="#999"/><path d="M7 7h1v2H7zM10 7h1v2h-1z" fill="#222"/></symbol>
<symbol id="down" viewBox="0 0 18 18"><path d="M3 4h12l-6 9z" fill="#d64a3a"/></symbol>
<symbol id="up" viewBox="0 0 18 18"><path d="M3 14h12L9 5z" fill="#d64a3a"/></symbol>
<symbol id="chg" viewBox="0 0 18 18"><path d="M3 4h9v8H3z" fill="none" stroke="#d64a3a" stroke-width="2.500"/><path d="M11 9h6l-3 5z" fill="#d64a3a"/></symbol>
<symbol id="ud" viewBox="0 0 18 18"><path d="M3 7l6-6 6 6zM3 11l6 6 6-6z" fill="#d64a3a"/><path d="M2 9h14" stroke="#d64a3a"/></symbol>
<symbol id="wc" viewBox="0 0 18 18"><use href="#waves" opacity=".8"/><path d="M9 6l7 7-3 .5 1 3.500-2 1-1-4-2 2z" fill="#333"/></symbol>
<symbol id="cs" viewBox="0 0 18 18"><circle cx="7" cy="7" r="6" fill="none" stroke="#bbb"/><path d="M8.500 8.500h8v8h-8z" fill="#fff" stroke="#d64a3a" stroke-width="1.300"/></symbol>
<symbol id="tt" viewBox="0 0 18 18"><path d="M10 1h7v4h-2l-2 5-1-5z" fill="#999"/><path d="M1 17V11h14" fill="none" stroke="#c49a55"/><path d="M6 17v-6" stroke="#c49a55"/></symbol>
<symbol id="mf" viewBox="0 0 18 18"><path d="M1 1h14v3H1z" fill="#aaa"/><path d="M5 4h7l-2 5H7z" fill="#bbb"/><path d="M1 13h9v4H1z" fill="#9cbbd6"/><path d="M12 9h5v3h-5z" fill="#ccc"/></symbol>
<symbol id="bp2" viewBox="0 0 18 18"><circle cx="6" cy="6" r="5.500" fill="#eee" stroke="#888"/><path d="M6 .5a5.500 5.500 0 0 1 0 11z" fill="#aaa"/><path d="M9 17L15 5l2 1-6 12z" fill="#e8c888"/></symbol>
<symbol id="lt1" viewBox="0 0 18 18"><path d="M1 3h11v12a5.500 2 0 0 1-11 0z" fill="#e5bb7c"/><path d="M1 3h11v6H1z" fill="#5c95cc"/><ellipse cx="6.500" cy="3" rx="5.500" ry="2" fill="#8ab6dd"/><path d="M14 13V6" stroke="#222" stroke-width="2"/><path d="M11 7l3-4 3 4z" fill="#222"/></symbol>
<symbol id="lt2" viewBox="0 0 18 18"><path d="M3 3h10v11a5 2 0 0 1-10 0z" fill="#e5bb7c"/><path d="M3 3h10v5H3z" fill="#5c95cc"/><ellipse cx="8" cy="3" rx="5" ry="2" fill="#8ab6dd"/><path d="M8 0v3" stroke="#222"/><path d="M5 14c4 3 8 1 9-3" fill="none" stroke="#222" stroke-width="2"/><path d="M11 11l6-1-2 5z" fill="#222"/></symbol>
<symbol id="lt3" viewBox="0 0 18 18"><path d="M2 15l2 3 8-8-3-3z" fill="#e5bb7c" stroke="#b48a40" stroke-width=".6"/><circle cx="14" cy="4" r="3.500" fill="#4a7fb5"/><path d="M4 9c0-4 2-5 5-6" fill="none" stroke="#222" stroke-width="1.500"/><path d="M6 1l5 1-3 4z" fill="#222"/></symbol>
<symbol id="lt4" viewBox="0 0 18 18"><path d="M1 13l8-3 8 3-8 4z" fill="#e5bb7c"/><path d="M5 3h7l3 10-6 3-6-3z" fill="#5c95cc"/><path d="M13 10V4" stroke="#222" stroke-width="1.500"/><path d="M10.500 5l2.500-4 2.500 4z" fill="#222"/></symbol>
<symbol id="sl1" viewBox="0 0 18 18"><path d="M1 10l8-6 8 3v6l-8 4-8-3z" fill="#c9974f"/><path d="M1 10l8-6 8 3-8 4z" fill="#4a7fb5"/></symbol>
<symbol id="sl2" viewBox="0 0 18 18"><path d="M1 8l8-6 6 3v4l-7 3-7-2z" fill="#c9974f"/><path d="M1 8l8-6 6 3-7 4z" fill="#4a7fb5"/><path d="M7 17l9-8v8z" fill="#fff" stroke="#222"/></symbol>
<symbol id="bx1" viewBox="0 0 18 18"><path d="M9 1l8 4v9l-8 4-8-4V5z" fill="#c9974f"/><path d="M9 1l8 4-8 4-8-4z" fill="#e5bb7c"/><path d="M3 7h9v8H3z" fill="#2f6aa8"/></symbol>
<symbol id="bx2" viewBox="0 0 18 18"><path d="M9 1l8 4v9l-8 4-8-4V5z" fill="#c9974f"/><path d="M9 1l8 4-8 4-8-4z" fill="#e5bb7c"/><path d="M5 7l6 2v7l-6-2z" fill="#4a7fb5"/></symbol>
<symbol id="lx" viewBox="0 0 18 18"><path d="M2 6l7-3 7 5-1 3-8 1z" fill="#e5bb7c"/><path d="M2 6c3-3 8-4 14 2" fill="none" stroke="#222" stroke-width="1.500"/><path d="M4 6c3-1 6-1 8 2" fill="#9fc0de"/></symbol>
<symbol id="up1" viewBox="0 0 18 18"><path d="M1 11l8-4 8 4-8 5z" fill="#4a7fb5"/><path d="M1 11v2l8 4 8-4v-2l-8 5z" fill="#c9974f"/><path d="M9 10V4" stroke="#222" stroke-width="2.500"/><path d="M5 5l4-4 4 4z" fill="#222"/></symbol>
<symbol id="ps" viewBox="0 0 18 18"><path d="M1 3l6-2 5 3v6l-5 3-6-3z" fill="#4a7fb5"/><path d="M1 3l6-2 5 3-6 2z" fill="#c9974f"/><path d="M10 11h7v6h-7z" fill="#4a7fb5"/></symbol>
<symbol id="nodes" viewBox="0 0 18 18"><path d="M3 3h12v12H3z" fill="none" stroke="#4a7fb5"/><path d="M0 0h5v5H0z" fill="#c49a55"/><path d="M13 0h5v5h-5zM0 13h5v5H0zM13 13h5v5h-5z" fill="#4a7fb5"/></symbol>
<symbol id="mesh" viewBox="0 0 18 18"><path d="M9 1l8 4v8l-8 4-8-4V5z" fill="#c9974f" stroke="#4a7fb5"/><path d="M1 5l8 4 8-4M9 9v8M5 3l8 4v8M13 3L5 7v8M1 9l8 4 8-4" fill="none" stroke="#4a7fb5" stroke-width=".8"/></symbol>
<symbol id="mag" viewBox="0 0 18 18"><path d="M1 14l5-5 6 3 5 5H1z" fill="#c9974f"/><path d="M6 11l4-2 7 8" fill="#5d9b85"/><circle cx="9" cy="6" r="4.500" fill="#fff" stroke="#555"/><path d="M6 9l-3 3" stroke="#555" stroke-width="2"/></symbol>
<symbol id="frm" viewBox="0 0 18 18"><path d="M1.500 1.500h15v15h-15z" fill="#fff" stroke="#4a7fb5" stroke-width="1.500"/><path d="M4 4h4v4H4zM10 5h4v1h-4zM10 8h4v1h-4zM4 11h10v1H4z" fill="none" stroke="#4a7fb5"/></symbol>
<symbol id="chk" viewBox="0 0 18 18"><path d="M1 1h8v8H1z" fill="#4a7fb5"/><path d="M9 1h8v8H9zM1 9h8v8H1z" fill="#e5bb7c"/><path d="M9 9h8v8H9z" fill="#444"/><path d="M11 10l6 5-2 .5 1 2-2 .5-1-2-2 1z" fill="#fff"/></symbol>
<symbol id="ar1" viewBox="0 0 18 18"><path d="M1 7l8-4 8 3v7l-8 3-8-3z" fill="#c9974f"/><path d="M1 7l8-4 8 3-8 4z" fill="#5c8fc0"/><path d="M1 7h7v7H1z" fill="#4a7fb5"/><path d="M10 2v8" stroke="#222"/><path d="M7 5l3-4 3 4z" fill="#222"/></symbol>
<symbol id="dd" viewBox="0 0 18 18"><path d="M9 1l7 4v8l-7 4-7-4V5z" fill="#c9974f"/><path d="M9 1l7 4-7 4-7-4z" fill="#e5bb7c"/><path d="M9 0v18" stroke="#222" stroke-dasharray="2 1" stroke-width="1.500"/></symbol>
<symbol id="st" viewBox="0 0 18 18"><path d="M1 13h5V9h5V5h5l1 2-10 9H1z" fill="#4a7fb5"/><path d="M1 13l6-5 5-4 4 1" fill="#8fb6da"/><path d="M11 17l5-9 1 1-4 8z" fill="#d9a300"/></symbol>
<symbol id="st2" viewBox="0 0 18 18"><path d="M1 8l8-5 7 3v6l-7 4-8-3z" fill="#c9974f"/><path d="M1 8l8-5 7 3-8 4z" fill="#4a7fb5"/><path d="M11 17l5-9 1 1-4 8z" fill="#d9a300"/></symbol>
<symbol id="st3" viewBox="0 0 18 18"><path d="M1 8l8-5 7 3v3l-7 3-8-3z" fill="#c9974f"/><path d="M1 8l8-5 7 3-8 4z" fill="#4a7fb5"/><path d="M9 11l7 6M16 11l-7 6" stroke="#d64a3a" stroke-width="2"/></symbol>
<symbol id="gd" viewBox="0 0 18 18"><path d="M9 1l8 4v8l-8 4-8-4V5z" fill="#c9974f"/><path d="M9 1l8 4-8 4-8-4z" fill="#e5bb7c"/><ellipse cx="9" cy="11" rx="4" ry="5" fill="#4a7fb5"/><path d="M9 0v18" stroke="#222" stroke-dasharray="2 1" stroke-width="1.500"/></symbol>
<symbol id="bxx" viewBox="0 0 18 18"><path d="M9 2l8 3v9l-8 3-8-3V5z" fill="#c9974f"/><path d="M9 2l8 3-8 3-8-3z" fill="#e5bb7c"/><path d="M1 6h8v9l-8-1z" fill="#edc9b0"/><path d="M3 8l4 5M7 8l-4 5" stroke="#d64a3a" stroke-width="1.500"/></symbol>
<symbol id="bxd" viewBox="0 0 18 18"><path d="M8 1l7 3v8l-7 3-7-3V4z" fill="#c9974f"/><path d="M8 1l7 3-7 3-7-3z" fill="#e5bb7c"/><path d="M1 6h3v8H1zM5 6h3v8H5z" fill="none" stroke="#2f5f8f" stroke-width="1.300"/><path d="M11 17l5-5 2 1-5 5z" fill="#c9247e"/></symbol>
<symbol id="bxr" viewBox="0 0 18 18"><path d="M8 1l7 3v8l-7 3-7-3V4z" fill="#c9974f"/><path d="M8 1l7 3-7 3-7-3z" fill="#e5bb7c"/><path d="M14 7c4 4 2 8-3 8H5" fill="none" stroke="#d64a3a" stroke-width="2"/><path d="M6 12l-5 3 5 3z" fill="#d64a3a"/></symbol>
<symbol id="sm1" viewBox="0 0 18 18"><path d="M1 11l7-7 8 3v5l-8 3z" fill="#c9974f"/><path d="M5 6l4-3 6 3-4 4z" fill="#c9247e"/></symbol>
<symbol id="sm2" viewBox="0 0 18 18"><path d="M1 11l7-7 8 3v5l-8 4z" fill="#c9974f"/><path d="M1 11l5-1V7l4-1V3l6 3v2l-8 3v2l-7 2z" fill="#c9247e"/></symbol>
<symbol id="sm3" viewBox="0 0 18 18"><path d="M1 11l6-6 8 3-7 4z" fill="#ddd"/><path d="M1 11l7 1v3l-7-1z" fill="#bbb"/><path d="M10 17l5-5 2 1-5 5z" fill="#c9247e"/><path d="M9 14l3 3" stroke="#4a7fb5" stroke-width="2"/></symbol>
<symbol id="sm4" viewBox="0 0 18 18"><path d="M1 9l6-5 8 3-7 4z" fill="#e5e5e5"/><path d="M1 9l7 2v4l-7-2z" fill="#ccc"/><path d="M10 17l5-5 2 1-5 5z" fill="#e57ab5"/></symbol>
<symbol id="r1" viewBox="0 0 18 18"><path d="M8 5l7 3v6l-7 3-7-3V8z" fill="#5d8c7c" stroke="#555"/><path d="M8 5l7 3-7 3-7-3z" fill="#6ea08e"/><path d="M10 6V2l6-1-3 3z" fill="#9fbfd9" stroke="#4a7fb5"/></symbol>
<symbol id="r2" viewBox="0 0 18 18"><path d="M1 8h16v9H1z" fill="#e5bb7c"/><circle cx="9" cy="11" r="4" fill="#fff"/><path d="M6 3h6M9 3v12M7 6h4M7 9h4M9 1h8" stroke="#4a7fb5"/></symbol>
<symbol id="r3" viewBox="0 0 18 18"><circle cx="9" cy="10" r="7" fill="none" stroke="#4a7fb5" stroke-width="1.200"/><path d="M6 10h6M9 7v6" stroke="#aaa"/><path d="M13 3h4M15 1v4" stroke="#bbb"/></symbol>
<symbol id="r4" viewBox="0 0 18 18"><path d="M1 17V5h6l1 2h7v10z" fill="#9a7a44"/><path d="M1 17l3-7h14l-3 7z" fill="#eec58a"/><path d="M8 5c2-3 4-3 7-3V0l3 3-3 3V4c-3 0-5 0-7 1z" fill="#5d9b85"/></symbol>
<symbol id="ml1" viewBox="0 0 18 18"><path d="M1 1h7v7H1z" fill="#0af" stroke="#06c"/><path d="M10 1h7v7h-7z" fill="#0af" stroke="#06c"/><path d="M1 10h7v7H1z" fill="#0af" stroke="#06c"/><path d="M10 10h7v7h-7z" fill="#0af" stroke="#06c"/></symbol>
<symbol id="ml2" viewBox="0 0 18 18"><path d="M1 16h16M3 16V9M9 16V3M15 16V7" stroke="#00c" stroke-width="2"/></symbol>
<symbol id="ml3" viewBox="0 0 18 18"><circle cx="5" cy="5" r="4" fill="#0cf" stroke="#06c"/><circle cx="13" cy="5" r="4" fill="#0cf" stroke="#06c"/><circle cx="5" cy="13" r="4" fill="#0cf" stroke="#06c"/><circle cx="13" cy="13" r="4" fill="#0cf" stroke="#06c"/></symbol>
<symbol id="ml4" viewBox="0 0 18 18"><path d="M1 16V3h6l2 2h6v11z" fill="#7a7a1a" stroke="#222"/><path d="M3 7l3 6 6-9" fill="none" stroke="#1a6ccc" stroke-width="2"/><path d="M9 16l6-7h3l-4 7z" fill="#f0e020"/></symbol>
<symbol id="ml5" viewBox="0 0 18 18"><path d="M1 15V3c0-1 1-2 2-2h4l2 2h6c1 0 2 1 2 2v10c0 1-1 2-2 2H3c-1 0-2-1-2-2z" fill="#d0d0d0" stroke="#222"/></symbol>
<symbol id="ml6" viewBox="0 0 18 18"><path d="M4 1h10v10l-5 6-5-6z" fill="#1a2a80" stroke="#bcc"/><path d="M4 11L14 3M4 7l8-6M6 14l8-7" stroke="#bcc"/></symbol>
<symbol id="ml7" viewBox="0 0 18 18"><path d="M1 1h16v16H1z" fill="#111"/><path d="M13 1v11c0 2-1 3-3 3H3" fill="none" stroke="#3c3"/><path d="M4 4h4M6 2v4" stroke="#3c3"/></symbol>
<symbol id="ml8" viewBox="0 0 18 18"><path d="M1 1h16v16H1z" fill="#111"/><path d="M1 5c4-3 6 2 9 0s5-2 7 0M1 10c4-3 6 2 9 0s5-2 7 0M1 15c4-3 6 2 9 0s5-2 7 0" fill="none" stroke="#ddd" stroke-width="1.500"/></symbol>
<symbol id="triad" viewBox="0 0 65 62"><path d="M10 45h24" stroke="#b00" stroke-width="1.500"/><path d="M30 43l15 2-15 2z" fill="#700"/><path d="M10 45V35" stroke="#008" stroke-width="1.500"/><circle cx="10" cy="36" r="2.500" fill="#006"/><path d="M10 33V20" stroke="#0a0" stroke-width="1"/><path d="M10 17l2 12H8z" fill="#1a9a2a"/><text x="6" y="12" class="axg">Y</text><text x="9" y="33" class="axb">Z</text><text x="48" y="50" class="axr">X</text></symbol>
</defs>
</svg>

<div class="app">
  <header class="title">
    <svg class="logo" viewBox="0 0 20 20"><path d="M2 1h5l10 17h-5z" fill="#222"/><path d="M17 1l-5 8 2 3 6-11z" fill="#666"/><path d="M3 18l6-9 2 3-4 7z" fill="#999"/><path d="M5 1l8 12" stroke="#e0c040"/></svg>
    <span class="ttxt">Mastercam 铣削 X9</span>
    <svg class="wc min" viewBox="0 0 12 12"><path d="M2 6h9" stroke="#bbb" stroke-width="2"/></svg>
    <svg class="wc res" viewBox="0 0 12 12"><path d="M.5 3.500h7v7h-7zM3 3.500V.5h7v7H8" fill="none" stroke="#bbb" stroke-width="1.200"/></svg>
    <svg class="wc cls" viewBox="0 0 12 12"><path d="M1 1l10 10M11 1L1 11" stroke="#bbb" stroke-width="1.200"/></svg>
  </header>
  <nav class="menu">
    <span>文件(F)</span><span>编辑(E)</span><span>视图(V)</span><span>分析(A)</span><span>绘图(C)</span><span>实体(S)</span><span>建模(P)</span><span>转换(X)</span><span>机床类型(M)</span><span>刀路(T)</span><span>屏幕(R)</span><span>设置(I)</span><span>帮助(H)</span>
  </nav>

  <div class="tb r1">
    <i class="gr"></i>
    <svg class="i m4"><use href="#new"/></svg><svg class="i"><use href="#open"/></svg><svg class="i"><use href="#save"/></svg><svg class="i"><use href="#saveas"/></svg><svg class="i"><use href="#print"/></svg><svg class="i"><use href="#prev"/></svg>
    <i class="gr m26"></i>
    <svg class="i m4"><use href="#undo"/></svg><svg class="i"><use href="#redo"/></svg>
    <i class="gr m6"></i>
    <svg class="i m4"><use href="#fit"/></svg><svg class="i"><use href="#fitb"/></svg>
    <i class="sp m4"></i>
    <svg class="i m3"><use href="#zwin"/></svg><svg class="i"><use href="#ztar"/></svg><svg class="i"><use href="#zsel"/></svg>
    <i class="sp m5"></i>
    <svg class="i m2"><use href="#unz"/></svg><svg class="i"><use href="#unz2"/></svg>
    <i class="sp m5"></i>
    <svg class="i m2"><use href="#rota"/></svg><svg class="i"><use href="#rotb"/></svg><svg class="i"><use href="#rotc"/></svg>
    <i class="gr m5"></i>
    <svg class="i m2"><use href="#cv1"/></svg><svg class="i"><use href="#cv3"/></svg><svg class="i"><use href="#cv2"/></svg><svg class="i"><use href="#cvbase"/></svg>
    <i class="gr m8"></i>
    <svg class="i m5"><use href="#cvr"/></svg><i class="ar m2"></i>
    <i class="gr m9"></i>
    <svg class="i m4"><use href="#globe"/></svg><i class="ar"></i>
    <svg class="i m3"><use href="#sphere"/></svg><i class="ar"></i>
    <svg class="i m1 cb"><use href="#disc"/></svg><svg class="i"><use href="#discg"/></svg><svg class="i co"><use href="#disc"/></svg><svg class="i co2"><use href="#disc"/></svg>
    <i class="gr m5"></i>
    <svg class="i m5"><use href="#pencil"/></svg><svg class="i"><use href="#pencil2"/></svg><i class="ar m2"></i>
    <i class="sp m6"></i>
    <svg class="i m4"><use href="#bent"/></svg><i class="ar fd"></i>
    <i class="gr m6"></i>
    <svg class="i m4"><use href="#qline"/></svg><svg class="i"><use href="#qdim"/></svg><svg class="i"><use href="#lst"/></svg>
    <i class="sp m6"></i>
    <svg class="i m1"><use href="#fan"/></svg><svg class="i"><use href="#doc"/></svg><svg class="i"><use href="#sigma"/></svg>
    <svg class="i m5"><use href="#grid4"/></svg><i class="ar mn2"></i>
    <i class="gr m6"></i>
    <svg class="i m5"><use href="#mach1"/></svg><svg class="i"><use href="#mach2"/></svg><svg class="i"><use href="#mach3"/></svg><svg class="i"><use href="#mach4"/></svg>
  </div>

  <div class="tb r2">
    <i class="gr"></i>
    <svg class="i m6"><use href="#plus"/></svg><i class="ar"></i>
    <svg class="i m4"><use href="#line"/></svg><i class="ar"></i>
    <svg class="i m2"><use href="#circ"/></svg><i class="ar m1"></i>
    <svg class="i m2"><use href="#rect"/></svg><i class="ar"></i>
    <svg class="i m3"><use href="#arc"/></svg><i class="ar"></i>
    <svg class="i m3"><use href="#spline"/></svg><i class="ar"></i>
    <svg class="i m3"><use href="#cyl"/></svg><i class="ar"></i>
    <svg class="i m3"><use href="#surf"/></svg><i class="ar m1"></i>
    <i class="gr m7"></i>
    <svg class="i m4"><use href="#brush"/></svg><svg class="i m2"><use href="#xline"/></svg><i class="ar"></i>
    <i class="gr m8"></i>
    <svg class="i m4"><use href="#mvb"/></svg><svg class="i"><use href="#mv"/></svg><svg class="i"><use href="#mvr"/></svg><svg class="i"><use href="#mvm"/></svg><svg class="i"><use href="#mvs"/></svg><svg class="i"><use href="#mvt"/></svg><svg class="i"><use href="#mvo"/></svg><svg class="i"><use href="#mvc"/></svg>
    <i class="sp m3"></i>
    <svg class="i m4"><use href="#fil"/></svg><i class="ar m1"></i>
    <svg class="i m1"><use href="#mg"/></svg><svg class="i m2"><use href="#mvx"/></svg><i class="ar"></i>
    <i class="gr m7"></i>
    <svg class="i m4"><use href="#bulb"/></svg><svg class="i"><use href="#note"/></svg>
    <i class="sp m5"></i>
    <svg class="i m4"><use href="#dimh"/></svg><i class="ar"></i>
    <svg class="i m3"><use href="#dimv"/></svg><i class="ar"></i>
    <i class="sp m6"></i>
    <svg class="i m4"><use href="#hatch"/></svg><i class="ar"></i>
    <i class="gr m7"></i>
    <svg class="i m3"><use href="#s1"/></svg><svg class="i"><use href="#s2"/></svg><svg class="i m1"><use href="#s3"/></svg><svg class="i"><use href="#s4"/></svg><svg class="i m1"><use href="#s5"/></svg><i class="ar m1"></i>
    <i class="sp m5"></i>
    <svg class="i m3"><use href="#w1"/></svg><svg class="i"><use href="#w2"/></svg><svg class="i"><use href="#w3"/></svg>
    <i class="sp m5"></i>
    <svg class="i m4"><use href="#p1"/></svg><i class="ar"></i>
    <svg class="i m3"><use href="#p2"/></svg><i class="ar"></i>
    <svg class="i m2"><use href="#p3"/></svg><i class="ar m2"></i>
  </div>

  <div class="tb r3">
    <i class="gr"></i>
    <b class="xl m8">X</b>
    <div class="cmb m8"><span>-136.35629</span><i class="ar"></i></div>
    <b class="xl m8">Y</b>
    <div class="cmb m7"><span>-22.31279</span><i class="ar"></i></div>
    <b class="xl m7">Z</b>
    <div class="cmb m9"><span>0.0</span><i class="ar"></i></div>
    <svg class="i m3"><use href="#bp"/></svg><svg class="i"><use href="#gp"/></svg><svg class="i"><use href="#xc"/></svg><i class="ar m1 fd"></i>
    <svg class="i m1"><use href="#help"/></svg>
    <i class="gr m21"></i>
    <svg class="i m4"><use href="#selt"/></svg>
    <i class="sp m5"></i>
    <svg class="i m3"><use href="#sel2"/></svg>
    <i class="sp m4"></i>
    <svg class="i m3"><use href="#selr"/></svg>
    <i class="sp m4"></i>
    <svg class="i m5"><use href="#seld"/></svg><i class="ar"></i>
    <i class="sp m5"></i>
    <svg class="i m4"><use href="#dash"/></svg><i class="ar m1"></i>
    <svg class="i m1"><use href="#cur"/></svg><svg class="i"><use href="#bchk"/></svg>
    <i class="sp m5"></i>
    <svg class="i m2"><use href="#c1"/></svg><svg class="i"><use href="#c2"/></svg><svg class="i"><use href="#c3"/></svg>
    <i class="sp m4"></i>
    <svg class="i m3"><use href="#c4"/></svg><svg class="i"><use href="#cb"/></svg>
    <i class="sp m4"></i>
    <svg class="i m3 hl"><use href="#tgt"/></svg><svg class="i"><use href="#clip"/></svg>
    <i class="sp m4"></i>
    <svg class="i m3"><use href="#nor"/></svg><svg class="i"><use href="#okg"/></svg><svg class="i"><use href="#help"/></svg>
  </div>

  <main class="main">
    <aside class="lt">
      <i class="hgr t6"></i>
      <svg class="v t8"><use href="#lt1"/></svg>
      <svg class="v t2"><use href="#lt2"/></svg>
      <svg class="v t4"><use href="#lt3"/></svg>
      <svg class="v t4"><use href="#lt4"/></svg>
      <i class="hs t7"></i>
      <svg class="v t5"><use href="#sl1"/></svg>
      <i class="tri t5"></i>
      <svg class="v t2"><use href="#sl2"/></svg>
      <i class="tri t6"></i>
      <i class="hs t7"></i>
      <svg class="v t5"><use href="#bx1"/></svg>
      <svg class="v t4"><use href="#bx2"/></svg>
      <svg class="v t5"><use href="#lx"/></svg>
      <i class="tri t4"></i>
      <i class="hs t6"></i>
      <svg class="v t4"><use href="#up1"/></svg>
      <svg class="v t6"><use href="#ps"/></svg>
      <i class="tri t3"></i>
      <svg class="v t5"><use href="#nodes"/></svg>
      <i class="tri t5"></i>
      <svg class="v t4"><use href="#mesh"/></svg>
      <svg class="v t2"><use href="#mag"/></svg>
      <svg class="v t5"><use href="#frm"/></svg>
      <i class="hgr t9"></i>
      <svg class="v t6"><use href="#chk"/></svg>
      <svg class="v t4"><use href="#ar1"/></svg>
      <svg class="v t4"><use href="#dd"/></svg>
      <i class="hs t6"></i>
      <svg class="v t5"><use href="#st"/></svg>
      <svg class="v t3"><use href="#st2"/></svg>
      <svg class="v t4"><use href="#st3"/></svg>
      <i class="hs t7"></i>
      <svg class="v t4"><use href="#gd"/></svg>
      <svg class="v t5"><use href="#bxx"/></svg>
      <svg class="v t4"><use href="#bxd"/></svg>
      <svg class="v t4"><use href="#bxr"/></svg>
      <i class="hs t6"></i>
      <svg class="v t3"><use href="#sm1"/></svg>
      <svg class="v t4"><use href="#sm2"/></svg>
      <svg class="v t5"><use href="#sm3"/></svg>
      <svg class="v t4"><use href="#sm4"/></svg>
    </aside>

    <div class="ctr">
      <div class="lbl">功能状态栏</div>
      <div class="strip"></div>
      <div class="body">
        <section class="panel">
          <div class="ph">
            <span class="pt">刀路</span>
            <i class="pd"></i>
            <svg class="pin" viewBox="0 0 12 12"><path d="M3.500 1h5M4.500 1v5M7.500 1v5M2 6.500h8M6 7v5" fill="none" stroke="#666"/></svg>
            <svg class="px" viewBox="0 0 12 12"><path d="M1 1l10 10M11 1L1 11" stroke="#666" stroke-width="1.100"/></svg>
          </div>
          <div class="ptb a">
            <svg class="i"><use href="#pl1"/></svg><svg class="i m2"><use href="#pl2"/></svg>
            <i class="sp m3"></i>
            <svg class="i m4"><use href="#pl3"/></svg><svg class="i"><use href="#pl4"/></svg>
            <i class="sp m4"></i>
            <svg class="i m2"><use href="#wav"/></svg><svg class="i"><use href="#boxclip"/></svg><svg class="i"><use href="#wavg"/></svg><span class="g1">G1</span><svg class="i m1"><use href="#toolr"/></svg>
            <i class="sp m4"></i>
            <svg class="i m3"><use href="#stick"/></svg>
            <i class="sp m4"></i>
            <svg class="i m2"><use href="#help"/></svg>
          </div>
          <div class="ptb b">
            <svg class="i"><use href="#lock"/></svg><svg class="i"><use href="#waves"/></svg><svg class="i"><use href="#ghost"/></svg>
            <i class="sp m5"></i>
            <svg class="i m2"><use href="#down"/></svg><svg class="i"><use href="#up"/></svg><svg class="i"><use href="#chg"/></svg><svg class="i"><use href="#ud"/></svg>
            <i class="sp m4"></i>
            <svg class="i m3"><use href="#wc"/></svg><svg class="i"><use href="#cs"/></svg><svg class="i"><use href="#tt"/></svg>
            <i class="sp m4"></i>
            <svg class="i m3"><use href="#mf"/></svg><svg class="i"><use href="#bp2"/></svg>
          </div>
          <div class="pw">
            <div class="tbox">
              <div class="tree">
                <svg class="tl"><path d="M31 19v22M31 46v-5M50 51v102h11M70 72v64h10M18 10h4M37 28h5M37 46h5M56 64h4M70 82h10M70 100h10M70 118h10M70 136h10"/></svg>
                <div class="row l0"><i class="ex mi"></i><svg class="ti"><use href="#ml1"/></svg><span>机床群组-1</span></div>
                <div class="row l1"><i class="ex pl"></i><svg class="ti"><use href="#ml2"/></svg><span>属性 - 3 - AXIS VMC</span></div>
                <div class="row l1"><i class="ex mi"></i><svg class="ti"><use href="#ml3"/></svg><span>刀具群组-1</span></div>
                <div class="row l2"><i class="ex mi"></i><svg class="ti"><use href="#ml4"/></svg><span class="sel">1 - 深孔啄钻(G83) - [WCS: 俯视图] - [刀具面: 俯视图] -</span></div>
                <div class="row l3"><svg class="ti"><use href="#ml5"/></svg><span>参数</span></div>
                <div class="row l3"><svg class="ti"><use href="#ml6"/></svg><span>#1 - M6.00 钻头/钻孔 - 标准钻头 - 6</span></div>
                <div class="row l3"><svg class="ti"><use href="#ml7"/></svg><span>图形 - (1) 点</span></div>
                <div class="row l3"><svg class="ti"><use href="#ml8"/></svg><span>刀路 - 4.5K - T.NC - 程序号码 0</span></div>
                <div class="row l4"><svg class="pa" viewBox="0 0 15 15"><path d="M0 0l15 7.500L0 15z" fill="#f00"/><path d="M0 0v15" stroke="#800"/></svg></div>
              </div>
              <div class="hsb"><i class="sl"></i><i class="th"></i><i class="sr"></i></div>
            </div>
          </div>
          <div class="tabs"><span class="tab on">刀路</span><span class="tab">实体</span></div>
        </section>

        <section class="vw">
          <div class="vp">
            <svg class="tr t1"><use href="#triad"/><text x="5" y="58" class="axl">绘</text></svg>
            <svg class="tr t2p"><use href="#triad"/><text x="5" y="58" class="axl">刀</text></svg>
            <svg class="tr t3p"><use href="#triad"/></svg>
            <svg class="cir"><ellipse cx="55" cy="50" rx="46" ry="41.500" fill="none" stroke="#1a1a8c" stroke-width="1.200"/><path d="M56 52v37" stroke="#1f8cf0"/><path d="M56 50h26" stroke="#000070" stroke-width="1.500"/><path d="M76 47l13 3-13 3zM56 22l3 14h-6z" fill="#000070"/><path d="M56 50V30" stroke="#000070" stroke-width="1.500"/><circle cx="56" cy="42" r="2.500" fill="#000070"/><text x="52" y="18" class="axn">Y</text><text x="55" y="39" class="axn">Z</text><text x="93" y="55" class="axn">X</text></svg>
            <div class="scale"><b>21.021 mm</b><span>公制</span></div>
          </div>
          <div class="vsep"></div>
          <div class="vtabs"><span class="vtab">主视图面板</span></div>
        </section>
      </div>
    </div>

    <aside class="rt">
      <i class="hgr t8"></i>
      <svg class="v t7"><use href="#r1"/></svg>
      <svg class="v t5"><use href="#r2"/></svg>
      <svg class="v t2"><use href="#r3"/></svg>
      <svg class="v t4"><use href="#r4"/></svg>
      <i class="hgr tbig"></i>
      <svg class="v t7"><use href="#b1"/></svg>
      <svg class="v t3"><use href="#b2"/></svg>
      <svg class="v t4"><use href="#b3"/></svg>
      <svg class="v t4"><use href="#b4"/></svg>
      <svg class="v t3"><use href="#b5"/></svg>
      <svg class="v t5"><use href="#b6"/></svg>
      <svg class="v t5"><use href="#b7"/></svg>
      <svg class="v t4"><use href="#b8"/></svg>
      <svg class="v t4"><use href="#b9"/></svg>
      <svg class="v t3"><use href="#nor"/></svg>
      <i class="hs t7"></i>
      <svg class="v t3"><use href="#b10"/></svg>
      <svg class="v t5"><use href="#b11"/></svg>
      <svg class="v t4"><use href="#b12"/></svg>
      <i class="hs t6"></i>
      <svg class="v t5"><use href="#b13"/></svg>
      <svg class="v t4"><use href="#b14"/></svg>
      <svg class="v t4 fd"><use href="#b15"/></svg>
      <i class="hs t6"></i>
    </aside>
  </main>

  <footer class="status">
    <span class="stxt">WCS: 俯视图&nbsp;&nbsp;刀具/绘图平面: 俯视图</span>
    <span class="sb w31">3D</span>
    <span class="sb w76">屏幕视图</span>
    <span class="sb w55">WCS</span>
    <span class="sb w33">平面</span>
    <span class="sb w16">Z</span>
    <span class="sb w106 zin"><em>0.0</em><u></u><i class="chev"></i></span>
    <span class="sb w40 col"><svg class="sci" viewBox="0 0 18 14"><path d="M4.500 1.500h6v6h-6zM8.500 6.500h5v5h-5z" fill="#fff" stroke="#333"/></svg><i class="navy"></i></span>
    <span class="sb w40 col"><svg class="sci" viewBox="0 0 18 14"><path d="M6 2l5-1 2 2v9l-4 2-3-2z" fill="#666"/></svg><i class="gray"></i></span>
    <span class="sb w40 col"><svg class="sci" viewBox="0 0 18 14"><path d="M6 3l7-2v10l-7 2z" fill="#999" stroke="#666"/><path d="M9.500 2v10M6 8h7" stroke="#666"/></svg><i class="oran"></i></span>
    <span class="sb w37 lay">层别</span>
    <span class="sb w130 cb1"><span class="num">1</span><i class="chev"></i></span>
    <span class="sb w42">属性</span>
    <span class="sb w52 cb1"><span>*</span><i class="ar"></i></span>
    <span class="sb w72 cb1"><i class="lth"></i><i class="ar"></i></span>
    <span class="sb w84 cb1"><i class="ltn"></i><i class="ar"></i></span>
    <span class="sb w47">群组</span>
    <span class="sb w24">?</span>
  </footer>

  <div class="wm">
    <svg class="hex" viewBox="0 0 72 82">
      <path d="M36 0l36 21v40L36 82 0 61V21z" fill="#8fd4f8"/>
      <path d="M36 0l24 14c4 10 2 16-4 22L36 24 14 36C10 22 18 8 36 0z" fill="#d3eefc"/>
      <path d="M0 21c6-4 16-6 26-2L14 36c-4 6-4 14 0 22l16 10c-4 4-10 4-30-7z" fill="#a8def9"/>
      <path d="M72 21v40c-8 8-18 10-30 6l16-10c4-8 4-14 2-21z" fill="#7cc4ea"/>
      <path d="M16 62l26 6c8 4 12 3 18 0L36 82z" fill="#6fc6f2"/>
      <path d="M36 17l22 13v24L36 67 14 54V30z" fill="#fff"/>
      <path d="M36 22l19 11-19 11-19-11z" fill="#e4f4fd"/>
      <path d="M17 33l19 11v19L17 52z" fill="#a9d8f5"/>
      <path d="M55 33L36 44v19l19-11z" fill="#7fc5ee"/>
    </svg>
    <span class="wm1">3DS世界网</span>
    <span class="wm2">WWW.3DSJW.COM</span>
  </div>

  <div class="dlg">
    <div class="dh">
      <svg class="di" viewBox="0 0 19 15"><path d="M.5.5h18v14H.5z" fill="#eee" stroke="#aaa"/><path d="M2 2h12v11H2z" fill="#3f8a80"/><path d="M2 2h12v5H2z" fill="#4f7fb0"/><path d="M16 2h1v4h-1z" fill="#3f8a80"/></svg>
      <span>正在读取边界...</span>
      <svg class="dx" viewBox="0 0 12 12"><path d="M0 0l12 12M12 0L0 12" stroke="#ccc"/></svg>
    </div>
    <div class="dm">FILE DECODER MESSAGES - 300</div>
    <div class="df">
      <button class="btn pri" type="button"><span>是(<u>Y</u>)</span></button>
      <button class="btn" type="button"><span>否(<u>N</u>)</span></button>
    </div>
  </div>
</div>
</body>
</html>
```

FILE: styles.css
```css
* { box-sizing: border-box; }
html, body { margin: 0; padding: 0; }
body { width: 1920px; height: 1030px; overflow: hidden; background: #f0f0f0; color: #222; font-family: "Noto Sans", "Noto Sans CJK SC", sans-serif; font-size: 14px; }
.defs { position: absolute; width: 0; height: 0; }
.app { position: relative; width: 1920px; height: 1030px; display: flex; flex-direction: column; overflow: hidden; }

.title { height: 30px; display: flex; align-items: center; padding-left: 3px; }
.logo { width: 20px; height: 22px; }
.ttxt { margin-left: 6px; color: #a8a8a8; font-size: 14px; }
.wc { width: 12px; height: 12px; }
.min { margin-left: auto; margin-top: 4px; }
.res { margin-left: 22px; }
.cls { margin-left: 18px; margin-right: 10px; }

.menu { height: 26px; display: flex; align-items: center; gap: 17.3px; padding-left: 16px; font-size: 14px; line-height: 26px; }
.menu span { white-space: nowrap; }

.tb { display: flex; align-items: center; }
.r1 { height: 30px; padding-left: 6px; }
.r2 { height: 28px; padding-left: 4px; }
.r3 { height: 34px; padding-left: 6px; }

.i { width: 22px; height: 18px; flex: none; padding: 0 2px; overflow: visible; }
.gr { flex: none; width: 2px; height: 22px; background: repeating-linear-gradient(#bdbdbd 0 2px, transparent 2px 5px); }
.sp { flex: none; width: 1px; height: 22px; background: #c4c4c4; }
.ar { flex: none; width: 12px; height: 6px; position: relative; display: block; }
.ar::after { content: ""; position: absolute; left: 2px; top: 0; border-left: 4px solid transparent; border-right: 4px solid transparent; border-top: 5px solid #777; }
.fd { opacity: .5; }
.hl { background: #d8d8d8; height: 23px; padding: 2px; }
.m1 { margin-left: 1px; } .m2 { margin-left: 2px; } .m3 { margin-left: 3px; } .m4 { margin-left: 4px; } .m5 { margin-left: 5px; } .m6 { margin-left: 6px; } .m7 { margin-left: 7px; } .m8 { margin-left: 8px; } .m9 { margin-left: 9px; } .m21 { margin-left: 21px; } .m26 { margin-left: 26px; } .mn2 { margin-left: -2px; }
.cb { color: #33699e; } .co { color: #d9603f; } .co2 { color: #e0674a; }

.xl { width: 11px; flex: none; font-size: 18px; line-height: 1; color: #666; font-family: "Liberation Sans", sans-serif; margin-top: 2px; }
.cmb { width: 146px; height: 25px; flex: none; margin-top: 3px; border: 1px solid #a0aab5; display: flex; align-items: center; justify-content: space-between; padding: 0 2px 0 1px; font-size: 15px; color: #666; background: #f0f0f0; }
.cmb .ar { opacity: .5; }

.main { height: 857px; display: flex; }
.lt { width: 26px; flex: none; display: flex; flex-direction: column; align-items: center; }
.rt { width: 30px; flex: none; display: flex; flex-direction: column; align-items: center; }
.v { width: 18px; height: 18px; flex: none; overflow: visible; }
.hgr { flex: none; width: 13px; height: 2px; background: repeating-linear-gradient(90deg, #bdbdbd 0 2px, transparent 2px 4px); }
.hs { flex: none; width: 22px; height: 1px; background: #c8c8c8; }
.tri { flex: none; width: 0; height: 0; border-top: 5px solid transparent; border-bottom: 5px solid transparent; border-left: 5px solid #808080; }
.t2 { margin-top: 2px; } .t3 { margin-top: 3px; } .t4 { margin-top: 4px; } .t5 { margin-top: 5px; } .t6 { margin-top: 6px; } .t7 { margin-top: 7px; } .t8 { margin-top: 8px; } .t9 { margin-top: 9px; } .tbig { margin-top: 83px; }

.ctr { flex: 1; display: flex; flex-direction: column; min-width: 0; }
.lbl { height: 46px; padding-left: 251px; font-size: 12px; line-height: 49px; color: #000; }
.strip { height: 4px; background: #e8e8e8; }
.body { flex: 1; display: flex; min-height: 0; }

.panel { width: 434px; margin-right: 4px; flex: none; display: flex; flex-direction: column; }
.ph { height: 40px; display: flex; align-items: center; padding-left: 4px; }
.pt { font-size: 23px; color: #444; line-height: 1; }
.pd { margin-left: auto; width: 0; height: 0; border-left: 5px solid transparent; border-right: 5px solid transparent; border-top: 6px solid #666; }
.pin { width: 12px; height: 12px; margin-left: 9px; }
.px { width: 11px; height: 11px; margin-left: 8px; margin-right: 6px; }
.ptb { display: flex; align-items: center; }
.ptb.a { height: 27px; padding-left: 1px; }
.ptb.b { height: 28px; padding-left: 2px; }
.g1 { width: 22px; text-align: center; font-size: 12px; color: #6fa0c8; }
.pw { flex: 1; background: #fafafa; padding: 6px 2px 23px; min-height: 0; display: flex; }
.tbox { flex: 1; border: 1px solid #c4c4c4; background: #fff; display: flex; flex-direction: column; min-width: 0; }
.tree { flex: 1; position: relative; font-size: 14px; line-height: 18px; overflow: hidden; }
.tl { position: absolute; left: 0; top: 0; width: 120px; height: 170px; fill: none; stroke: #333; stroke-dasharray: 1 1; }
.row { position: relative; height: 18px; display: flex; align-items: center; white-space: nowrap; color: #222; }
.l0 { padding-left: 7px; } .l1 { padding-left: 26px; } .l2 { padding-left: 45px; } .l3 { padding-left: 80px; } .l4 { padding-left: 61px; }
.ex { flex: none; width: 11px; height: 11px; margin-right: 4px; border: 1px solid #9aa3ad; background: #f4f4f4; position: relative; }
.ex::before { content: ""; position: absolute; left: 1px; right: 1px; top: 4px; height: 1px; background: #445; }
.pl::after { content: ""; position: absolute; top: 1px; bottom: 1px; left: 4px; width: 1px; background: #445; }
.ti { width: 16px; height: 16px; flex: none; margin-right: 6px; }
.l2 .ti { margin-right: 4px; }
.sel { flex: 1; background: #e6e6e6; padding-left: 2px; overflow: hidden; margin-right: 1px; }
.pa { width: 15px; height: 15px; }
.hsb { height: 19px; flex: none; background: #f0f0f0; display: flex; align-items: center; margin-bottom: 1px; }
.th { display: block; width: 318px; height: 19px; background: #cdcdcd; margin-left: 6px; }
.sl, .sr { width: 8px; height: 8px; flex: none; border-left: 2px solid #555; border-bottom: 2px solid #555; transform: rotate(45deg); margin-left: 8px; }
.sr { border: 0; border-right: 2px solid #555; border-top: 2px solid #555; margin-left: 72px; }
.tabs { height: 27px; flex: none; display: flex; border-top: 1px solid #dcdcdc; font-size: 14px; }
.tab { height: 25px; line-height: 24px; padding: 0 7px; white-space: nowrap; }
.tab.on { background: #fff; border-right: 1px solid #ccc; border-bottom: 1px solid #ccc; width: 39px; padding: 0 0 0 6px; margin-right: 1px; }

.vw { flex: 1; display: flex; flex-direction: column; min-width: 0; background: #fff; }
.vp { flex: 1; position: relative; background: linear-gradient(#99a2ac, #ffffff); }
.vsep { height: 6px; flex: none; border-top: 2px solid #d0d0d0; background: #fff; }
.vtabs { height: 26px; flex: none; border-top: 1px solid #ccc; background: #f0f0f0; display: flex; }
.vtab { width: 80px; background: #fff; border-right: 1px solid #bbb; font-size: 14px; line-height: 26px; padding-left: 4px; color: #333; white-space: nowrap; }
.tr { position: absolute; width: 65px; height: 62px; overflow: visible; }
.t1 { left: 45px; top: 10px; } .t2p { left: 1361px; top: 10px; } .t3p { left: 46px; top: 674px; }
.axg, .axb, .axr, .axn { font: bold 13px "Liberation Sans", sans-serif; }
.axg { fill: #0c0; } .axb { fill: #00c; } .axr { fill: #f00; } .axn { fill: #000080; }
.axl { font: 12px "Noto Sans CJK SC", sans-serif; fill: #fff; }
.cir { position: absolute; left: 612px; top: 341px; width: 110px; height: 100px; overflow: visible; }
.scale { position: absolute; z-index: 2; left: 1306px; top: 740px; width: 98px; height: 25px; border-left: 1px solid #555; border-right: 1px solid #555; text-align: center; font: 12px/12px "Noto Sans", "Noto Sans CJK SC", sans-serif; color: #111; }
.scale b { display: block; height: 12px; border-bottom: 1px solid #111; font-size: 13px; line-height: 12px; }
.scale span { display: block; line-height: 14px; font-weight: 700; }

.status { height: 25px; flex: none; background: #5f5f5f; display: flex; padding-top: 2px; gap: 2px; }
.stxt { margin-right: auto; color: #eee; font-size: 14px; line-height: 22px; padding-left: 4px; white-space: nowrap; }
.sb { background: #f7f7f7; color: #222; display: flex; align-items: center; justify-content: center; height: 23px; font-size: 14px; position: relative; overflow: hidden; white-space: nowrap; }
.w31 { width: 31px; } .w76 { width: 76px; } .w55 { width: 55px; } .w33 { width: 33px; } .w16 { width: 16px; } .w106 { width: 106px; } .w40 { width: 40px; } .w37 { width: 37px; } .w130 { width: 130px; margin-left: -2px; } .w42 { width: 42px; } .w52 { width: 52px; } .w72 { width: 72px; } .w84 { width: 84px; } .w47 { width: 47px; } .w24 { width: 24px; }
.zin { justify-content: flex-start; background: #fff; }
.zin em { font-style: normal; background: #0078d7; color: #fff; width: 21px; height: 21px; line-height: 21px; text-align: center; margin-left: 1px; }
.zin u { display: block; width: 59px; height: 21px; background: #ffff80; }
.chev { position: absolute; right: 6px; top: 6px; width: 7px; height: 7px; border-right: 1px solid #555; border-bottom: 1px solid #555; transform: rotate(45deg); }
.col { flex-direction: column; justify-content: flex-start; }
.sci { width: 18px; height: 14px; flex: none; margin-top: 1px; }
.col i { display: block; width: 36px; height: 7px; flex: none; }
.navy { background: #000080; } .gray { background: #808080; } .oran { background: #ff8040; }
.lay { background: #f0f0f0; }
.cb1 { background: #fff; justify-content: flex-start; padding-left: 4px; }
.num { color: #1a1a8c; }
.cb1 .ar { position: absolute; right: 8px; top: 9px; opacity: .9; }
.lth { display: block; width: 47px; height: 4px; background: #000; }
.ltn { display: block; width: 60px; height: 1px; background: #000; }

.wm { position: absolute; left: 1637px; top: 935px; width: 283px; height: 82px; pointer-events: none; }
.hex { position: absolute; left: 0; top: 0; width: 72px; height: 82px; opacity: .95; }
.wm1 { position: absolute; left: 83px; top: 4px; font: 700 36px/52px "Noto Sans CJK SC", sans-serif; color: rgba(255,255,255,.9); white-space: nowrap; }
.wm2 { position: absolute; left: 83px; top: 50px; font: 400 21px/24px "Noto Sans", sans-serif; letter-spacing: 1px; color: rgba(255,255,255,.65); white-space: nowrap; }

.dlg { position: absolute; left: 824px; top: 414px; width: 272px; height: 193px; background: #fff; border: 1px solid #777; box-shadow: 0 2px 14px rgba(0,0,0,.35); display: flex; flex-direction: column; color: #111; }
.dh { height: 35px; flex: none; display: flex; align-items: center; padding-left: 9px; font-size: 15px; }
.di { width: 19px; height: 15px; margin-right: 6px; }
.dx { width: 12px; height: 12px; margin-left: auto; margin-right: 16px; }
.dm { flex: 1; padding: 36px 0 0 14px; font-size: 14.6px; line-height: 22px; color: #111; white-space: nowrap; }
.df { height: 65px; flex: none; background: #f0f0f0; display: flex; padding: 14px 23px 0 39px; gap: 12px; }
.btn { width: 98px; height: 33px; background: #e1e1e1; border: 1px solid #adadad; font: 14px "Noto Sans", "Noto Sans CJK SC", sans-serif; color: #111; padding: 0; display: flex; align-items: center; justify-content: center; }
.btn.pri { border: 2px solid #0078d7; outline: 1px dotted #111; outline-offset: -4px; }
```
